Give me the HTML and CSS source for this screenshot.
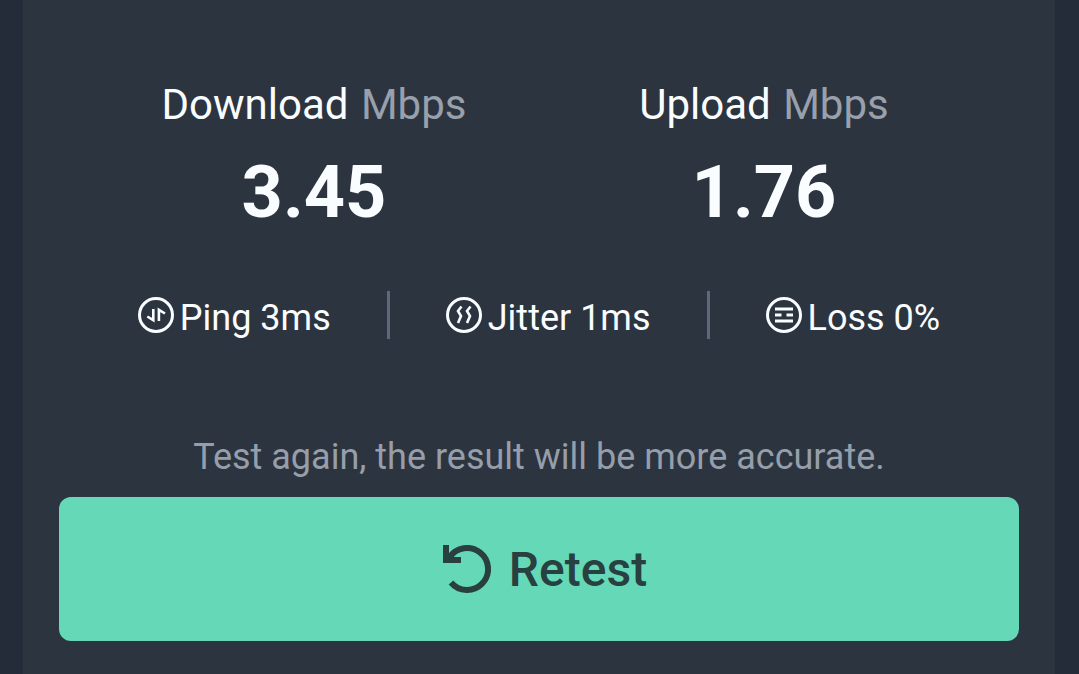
FILE: index.html
```html
<!DOCTYPE html>
<html lang="en">
<head>
    <meta charset="UTF-8">
    <meta name="viewport" content="width=device-width, initial-scale=1.0">
    <title>Speed Test</title>
    <link rel="stylesheet" href="styles.css">
</head>
<body>
    <main class="card">
        <div class="speeds">
            <div class="speed">
                <div class="label">Download <span class="unit">Mbps</span></div>
                <div class="number">3.45</div>
            </div>
            <div class="speed">
                <div class="label">Upload <span class="unit">Mbps</span></div>
                <div class="number">1.76</div>
            </div>
        </div>

        <div class="stats">
            <div class="stat">
                <svg class="stat-icon" viewBox="0 0 36 36" aria-hidden="true">
                    <circle cx="18" cy="18" r="16.5"/>
                    <path class="thin" d="M15.3 12V23.2L9.3 19.5M20.9 24V12.8L27 16.5"/>
                </svg>
                <span class="stat-text">Ping 3ms</span>
            </div>
            <div class="divider"></div>
            <div class="stat">
                <svg class="stat-icon" viewBox="0 0 36 36" aria-hidden="true">
                    <circle cx="18" cy="18" r="16.5"/>
                    <path class="thin" d="M15.5 9.5L12 14L15 19L12 26M24.5 9.5L21 14L24 19L21 26"/>
                </svg>
                <span class="stat-text">Jitter 1ms</span>
            </div>
            <div class="divider"></div>
            <div class="stat">
                <svg class="stat-icon" viewBox="0 0 36 36" aria-hidden="true">
                    <circle cx="18" cy="18" r="16.5"/>
                    <path d="M9 12H27M9 18H15.5M20.5 18H27M9 24H27"/>
                </svg>
                <span class="stat-text">Loss 0%</span>
            </div>
        </div>

        <p class="hint">Test again, the result will be more accurate.</p>
        <button class="retest" type="button">
            <svg class="retest-icon" viewBox="0 0 48 48" aria-hidden="true">
                <path class="arc" d="M6.5 12.5A21 21 0 1 1 8 37.5"/>
                <path class="head" d="M0 0H6V8L10 12H18V18H0Z"/>
            </svg>
            <span>Retest</span>
        </button>
    </main>
</body>
</html>
```

FILE: styles.css
```css
/* General Styles */
* {
    box-sizing: border-box;
}

body {
    margin: 0;
    padding: 0 24px 0 23px;
    font-family: Roboto, sans-serif;
    background-color: #242c39;
    color: #fafdff;
}

.card {
    min-height: 100vh;
    padding: 81px 36px 33px;
    background-color: #2c3440;
}

/* Download / Upload */
.speeds {
    display: grid;
    grid-template-columns: 1fr 1fr;
    padding: 0 30px;
    text-align: center;
}

.label {
    font-size: 42px;
    line-height: 48px;
}

.unit {
    margin-left: 2px;
    color: #98a0ac;
}

.number {
    margin-top: 20px;
    font-size: 72px;
    font-weight: bold;
    line-height: 88px;
}

/* Ping, jitter and loss */
.stats {
    display: flex;
    justify-content: center;
    align-items: center;
    gap: 56px;
    margin-top: 54px;
}

.stat {
    display: flex;
    align-items: center;
    gap: 6px;
    font-size: 36px;
    line-height: 40px;
}

.stat-text {
    padding-top: 6px;
}

.stat-icon {
    width: 36px;
    height: 36px;
    fill: none;
    stroke: #fafdff;
    stroke-width: 3;
}

.thin {
    stroke-width: 2.6;
}

.divider {
    width: 3px;
    height: 48px;
    background-color: #5c687c;
}

.hint {
    margin: 94px 0 16px;
    font-size: 36px;
    line-height: 48px;
    text-align: center;
    color: #969eaa;
}

/* Retest Button */
.retest {
    display: flex;
    justify-content: center;
    align-items: center;
    gap: 18px;
    width: 100%;
    height: 144px;
    padding: 0 0 0 12px;
    border: none;
    border-radius: 12px;
    background-color: #65d8b8;
    color: #28403f;
    font-family: inherit;
    font-size: 48px;
    font-weight: 500;
    cursor: pointer;
}

.retest-icon {
    width: 48px;
    height: 48px;
}

.arc {
    fill: none;
    stroke: #28403f;
    stroke-width: 6;
}

.head {
    fill: #28403f;
}
```
